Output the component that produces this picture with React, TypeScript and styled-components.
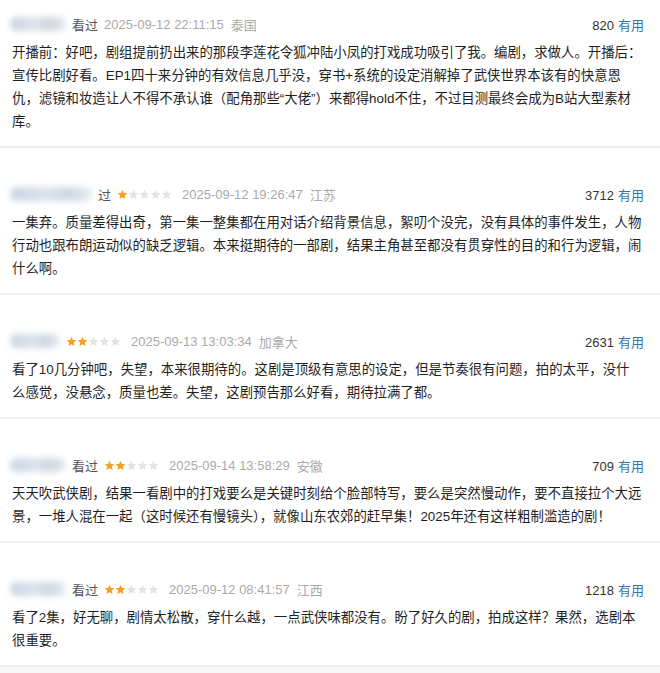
import React from 'react'
import styled, { createGlobalStyle } from 'styled-components'

interface Review {
  nameWidth: number
  watched: string
  stars: number | null
  time: string
  place: string
  votes: number
  text: string
}

const reviews: Review[] = [
  {
    nameWidth: 56,
    watched: '看过',
    stars: null,
    time: '2025-09-12 22:11:15',
    place: '泰国',
    votes: 820,
    text: '开播前：好吧，剧组提前扔出来的那段李莲花令狐冲陆小凤的打戏成功吸引了我。编剧，求做人。开播后：宣传比剧好看。EP1四十来分钟的有效信息几乎没，穿书+系统的设定消解掉了武侠世界本该有的快意恩仇，滤镜和妆造让人不得不承认谁（配角那些“大佬”）来都得hold不住，不过目测最终会成为B站大型素材库。',
  },
  {
    nameWidth: 82,
    watched: '过',
    stars: 1,
    time: '2025-09-12 19:26:47',
    place: '江苏',
    votes: 3712,
    text: '一集弃。质量差得出奇，第一集一整集都在用对话介绍背景信息，絮叨个没完，没有具体的事件发生，人物行动也跟布朗运动似的缺乏逻辑。本来挺期待的一部剧，结果主角甚至都没有贯穿性的目的和行为逻辑，闹什么啊。',
  },
  {
    nameWidth: 50,
    watched: '',
    stars: 2,
    time: '2025-09-13 13:03:34',
    place: '加拿大',
    votes: 2631,
    text: '看了10几分钟吧，失望，本来很期待的。这剧是顶级有意思的设定，但是节奏很有问题，拍的太平，没什么感觉，没悬念，质量也差。失望，这剧预告那么好看，期待拉满了都。',
  },
  {
    nameWidth: 56,
    watched: '看过',
    stars: 2,
    time: '2025-09-14 13:58:29',
    place: '安徽',
    votes: 709,
    text: '天天吹武侠剧，结果一看剧中的打戏要么是关键时刻给个脸部特写，要么是突然慢动作，要不直接拉个大远景，一堆人混在一起（这时候还有慢镜头），就像山东农郊的赶早集！2025年还有这样粗制滥造的剧！',
  },
  {
    nameWidth: 56,
    watched: '看过',
    stars: 2,
    time: '2025-09-12 08:41:57',
    place: '江西',
    votes: 1218,
    text: '看了2集，好无聊，剧情太松散，穿什么越，一点武侠味都没有。盼了好久的剧，拍成这样？果然，选剧本很重要。',
  },
]

const GlobalStyle = createGlobalStyle`
  body {
    margin: 0;
    background: #ffffff;
    font-family: "Liberation Sans", "Noto Sans CJK SC", sans-serif;
  }
`

const Page = styled.div`
  width: 660px;
  height: 673px;
  overflow: hidden;
  background: #f7f7f7;
`

const List = styled.div`
  background: #ffffff;
  display: flex;
  flex-direction: column;
`

const Item = styled.div<{ $first?: boolean }>`
  padding: ${({ $first }) => ($first ? '14px' : '36px')} 16px 13px 12px;
  border-bottom: 2px solid #efefef;
`

const Header = styled.div`
  display: flex;
  align-items: center;
  height: 20px;
  font-size: 13px;
`

const Meta = styled.div`
  display: flex;
  align-items: center;
  flex: 1;
  min-width: 0;
`

const BlurName = styled.span<{ $w: number }>`
  display: inline-block;
  width: ${({ $w }) => $w}px;
  height: 14px;
  margin-left: -2px;
  margin-right: 6px;
  border-radius: 7px;
  background: linear-gradient(90deg, #c9d3e2 0%, #dde3ec 45%, #cfd6e0 70%, #e6e9ee 100%);
  filter: blur(3px);
`

const Watched = styled.span`
  color: #555555;
  margin-right: 6px;
`

const Stars = styled.span`
  display: inline-flex;
  margin-right: 10px;
`

const Time = styled.span`
  color: #aaaaaa;
  margin-right: 7px;
`

const Place = styled.span`
  color: #aaaaaa;
`

const Votes = styled.div`
  color: #333333;
  white-space: nowrap;
`

const Useful = styled.span`
  color: #3377aa;
  margin-left: 4px;
`

const Body = styled.p`
  width: 630px;
  margin: 7px 0 0;
  font-size: 13.4px;
  line-height: 23px;
  color: #1f1f1f;
`

const Star = ({ on }: { on: boolean }) => (
  <svg width="11" height="11" viewBox="0 0 24 24">
    <path
      d="M12 1.5l3.1 7 7.6.7-5.8 5 1.8 7.5L12 17.8l-6.7 3.9 1.8-7.5-5.8-5 7.6-.7z"
      fill={on ? '#f5a021' : '#e3e3e3'}
    />
  </svg>
)

const Rating = ({ count }: { count: number }) => (
  <Stars>
    {[0, 1, 2, 3, 4].map((i) => (
      <Star key={i} on={i < count} />
    ))}
  </Stars>
)

export default function App() {
  return (
    <Page>
      <GlobalStyle />
      <List>
        {reviews.map((r, i) => (
          <Item key={i} $first={i === 0}>
            <Header>
              <Meta>
                <BlurName $w={r.nameWidth} />
                {r.watched && <Watched>{r.watched}</Watched>}
                {r.stars !== null && <Rating count={r.stars} />}
                <Time>{r.time}</Time>
                <Place>{r.place}</Place>
              </Meta>
              <Votes>
                {r.votes}
                <Useful>有用</Useful>
              </Votes>
            </Header>
            <Body>{r.text}</Body>
          </Item>
        ))}
      </List>
    </Page>
  )
}
